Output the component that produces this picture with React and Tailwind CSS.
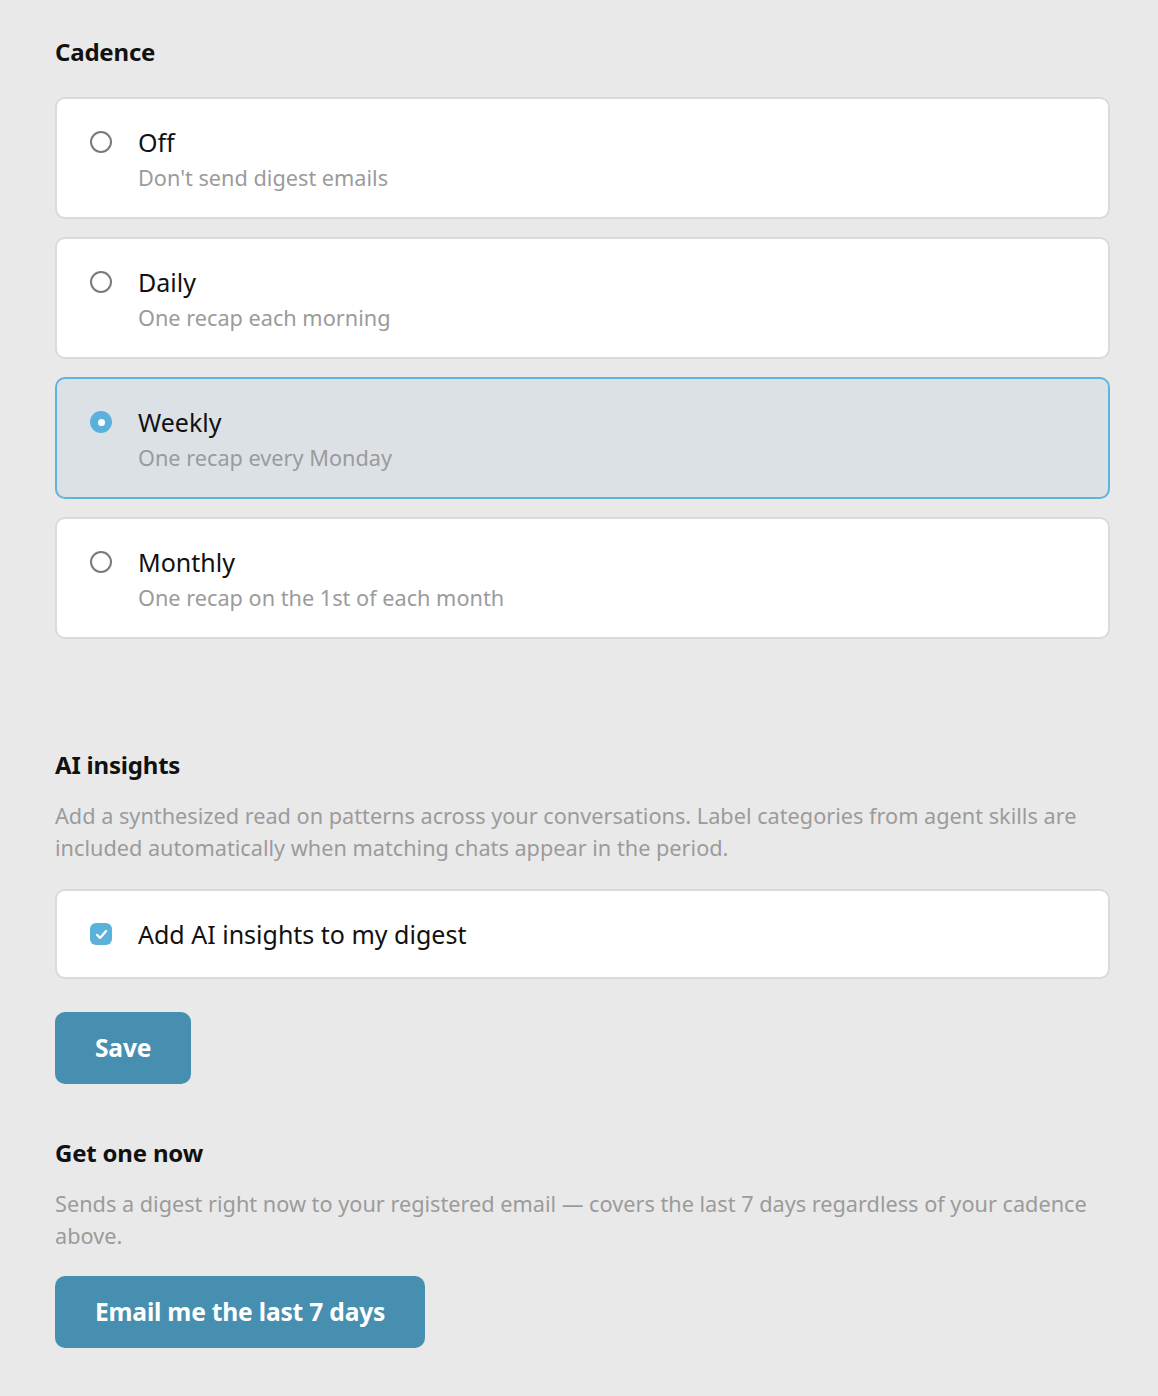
import React from "react";

const options = [
  { label: "Off", desc: "Don't send digest emails", selected: false },
  { label: "Daily", desc: "One recap each morning", selected: false },
  { label: "Weekly", desc: "One recap every Monday", selected: true },
  { label: "Monthly", desc: "One recap on the 1st of each month", selected: false },
];

function Radio({ selected }) {
  if (selected) {
    return (
      <span className="mt-[7px] flex h-[22px] w-[22px] shrink-0 items-center justify-center rounded-full bg-[#5ab2dc]">
        <span className="h-[7px] w-[7px] rounded-full bg-white" />
      </span>
    );
  }
  return (
    <span className="mt-[7px] h-[22px] w-[22px] shrink-0 rounded-full border-[2.5px] border-[#7a7a7a] bg-white" />
  );
}

export default function App() {
  return (
    <div
      className="min-h-[1396px] bg-[#e9e9e9] pl-[55px] pr-[48px] pt-[34px] pb-[48px] text-[#111]"
      style={{ fontFamily: '"Noto Sans", "Open Sans", sans-serif' }}
    >
      <h2 className="text-[24px] font-bold leading-[36px] tracking-[-0.2px]">Cadence</h2>
      <div className="mt-[27px] flex flex-col gap-[18px]">
        {options.map((o) => (
          <div
            key={o.label}
            className={
              o.selected
                ? "flex items-start gap-[26px] rounded-[10px] border-2 border-[#62b3d9] bg-[#dce1e6] pl-[33px] pr-6 pt-[25px] pb-[21px]"
                : "flex items-start gap-[26px] rounded-[10px] border-2 border-[#dadada] bg-white pl-[33px] pr-6 pt-[25px] pb-[21px]"
            }
          >
            <Radio selected={o.selected} />
            <div className="flex flex-col">
              <span className="text-[25px] leading-[36px] text-[#111]">{o.label}</span>
              <span className="text-[21.7px] leading-[36px] text-[#9b9b9b]">{o.desc}</span>
            </div>
          </div>
        ))}
      </div>

      <h2 className="mt-[108px] text-[24px] font-bold leading-[36px] tracking-[-0.2px]">AI insights</h2>
      <p className="mt-[17px] whitespace-nowrap text-[21.7px] leading-[32px] text-[#9b9b9b]">
        Add a synthesized read on patterns across your conversations. Label categories from agent skills are
        <br />
        included automatically when matching chats appear in the period.
      </p>
      <div className="mt-[25px] flex items-center gap-[26px] rounded-[10px] border-2 border-[#dadada] bg-white pl-[33px] pr-6 py-[25px]">
        <span className="flex h-[22px] w-[22px] shrink-0 items-center justify-center rounded-[6px] bg-[#5ab2dc]">
          <svg width="15" height="15" viewBox="0 0 14 14" fill="none">
            <path d="M2.8 7.4 L5.7 10.2 L11.3 3.8" stroke="white" strokeWidth="2.1" strokeLinecap="round" strokeLinejoin="round" />
          </svg>
        </span>
        <span className="text-[25px] leading-[36px] text-[#111]">Add AI insights to my digest</span>
      </div>

      <button className="mt-[33px] flex h-[72px] items-center rounded-[10px] bg-[#468fb0] px-[40px] text-[24.6px] font-bold tracking-[-0.2px] text-white">
        Save
      </button>

      <h2 className="mt-[51px] text-[24px] font-bold leading-[36px] tracking-[-0.2px]">Get one now</h2>
      <p className="mt-[17px] whitespace-nowrap text-[21.7px] leading-[32px] text-[#9b9b9b]">
        Sends a digest right now to your registered email — covers the last 7 days regardless of your cadence
        <br />
        above.
      </p>
      <button className="mt-[24px] flex h-[72px] items-center rounded-[10px] bg-[#468fb0] px-[40px] text-[24.6px] font-bold tracking-[-0.2px] text-white">
        Email me the last 7 days
      </button>
    </div>
  );
}
